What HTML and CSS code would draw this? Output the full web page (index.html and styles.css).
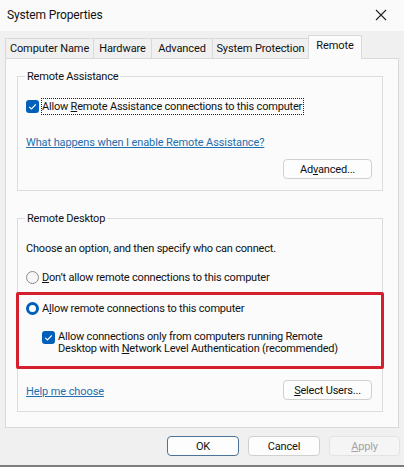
FILE: index.html
```html
<!DOCTYPE html>
<html>
<head>
<meta charset="utf-8">
<link rel="stylesheet" href="styles.css">
</head>
<body>
<div class="window">
  <div class="titlebar">
    <span class="title">System Properties</span>
    <svg class="close" width="12" height="12" viewBox="0 0 12 12"><path d="M1 1L11 11M11 1L1 11" stroke="#222" stroke-width="1.1" fill="none"/></svg>
  </div>
  <div class="tabs">
    <div class="tab">Computer Name</div>
    <div class="tab">Hardware</div>
    <div class="tab">Advanced</div>
    <div class="tab">System Protection</div>
    <div class="tab selected">Remote</div>
  </div>
  <div class="panel">
    <fieldset class="group group-ra">
      <legend>Remote Assistance</legend>
      <div class="row check-row">
        <span class="checkbox checked"><svg width="13" height="13" viewBox="0 0 13 13"><path d="M3.3 6.8L5.5 9L9.8 4.4" stroke="#fff" stroke-width="1.2" fill="none"/></svg></span>
        <span class="focus">Allow <u>R</u>emote Assistance connections to this computer</span>
      </div>
      <div class="link link-ra">What happens when I enable Remote Assistance?</div>
      <div class="btn-row">
        <div class="btn">Ad<u>v</u>anced...</div>
      </div>
    </fieldset>
    <fieldset class="group group-rd">
      <legend>Remote Desktop</legend>
      <div class="intro">Choose an option, and then specify who can connect.</div>
      <div class="row radio-row">
        <span class="radio"></span>
        <span><u>D</u>on’t allow remote connections to this computer</span>
      </div>
      <div class="highlight">
        <div class="row radio-row2">
          <span class="radio selected"></span>
          <span>A<u>l</u>low remote connections to this computer</span>
        </div>
        <div class="row nla-row">
          <span class="checkbox checked"><svg width="13" height="13" viewBox="0 0 13 13"><path d="M3.3 6.8L5.5 9L9.8 4.4" stroke="#fff" stroke-width="1.2" fill="none"/></svg></span>
          <span class="nla-text">Allow connections only from computers running Remote<br>Desktop with <u>N</u>etwork Level Authentication (recommended)</span>
        </div>
      </div>
      <div class="bottom-row">
        <div class="link">Help me choose</div>
        <div class="btn"><u>S</u>elect Users...</div>
      </div>
    </fieldset>
  </div>
  <div class="dialog-buttons">
    <div class="btn dbtn default">OK</div>
    <div class="btn dbtn">Cancel</div>
    <div class="btn dbtn disabled"><u>A</u>pply</div>
  </div>
</div>
</body>
</html>
```
FILE: styles.css
```css
* { box-sizing: border-box; }
html, body { margin: 0; padding: 0; }
body {
  font-family: Roboto, "Noto Sans", sans-serif;
  font-size: 11px;
  letter-spacing: -0.2px;
  line-height: 15px;
  color: #111;
  background: #f0f0f0;
}
.window {
  width: 404px;
  height: 467px;
  background: #f0f0f0;
  border-bottom: 2px solid #7d7d7d;
  display: flex;
  flex-direction: column;
}
.titlebar {
  height: 31px;
  background: #fafafa;
  display: flex;
  align-items: center;
  justify-content: space-between;
  padding: 0 17px 1px 7px;
  font-size: 12px;
  letter-spacing: -0.15px;
}
.close { display: block; }
.tabs {
  margin-top: 7px;
  margin-left: 5px;
  height: 20px;
  display: flex;
  align-items: flex-end;
  position: relative;
  z-index: 1;
}
.tab {
  height: 20px;
  border: 1px solid #d9d9d9;
  border-bottom: none;
  margin-right: -1px;
  display: flex;
  align-items: center;
  justify-content: center;
  white-space: nowrap;
  background: #f0f0f0;
  letter-spacing: -0.1px;
}
.tab:nth-child(1) { width: 89px; }
.tab:nth-child(2) { width: 59px; }
.tab:nth-child(3) { width: 62px; }
.tab:nth-child(4) { width: 97px; }
.tab.selected {
  width: 54px;
  height: 24px;
  margin-bottom: -1px;
  background: #fbfbfb;
  padding-bottom: 5px;
}
.panel {
  margin: 0 5px 0 5px;
  height: 370px;
  width: 394px;
  background: #fbfbfb;
  border: 1px solid #d9d9d9;
  padding: 10px 15px 0 11px;
}
.group {
  margin: 0;
  border: 1px solid #dcdcdc;
  padding: 0 0 10px 8px;
  min-width: 0;
}
.group legend {
  padding: 0 2px;
  margin-left: -1px;
}
.group-ra { height: 122px; }
.group-rd { margin-top: 20px; padding-bottom: 0; height: 201px; }
.row { display: flex; align-items: center; }
.check-row { margin-top: 15px; }
.checkbox {
  width: 13px;
  height: 13px;
  border-radius: 3px;
  background: #005fb8;
  margin-right: 3px;
  flex: none;
  display: block;
}
.checkbox svg { display: block; }
.focus {
  outline: 1px dotted #222;
  outline-offset: 0;
  padding: 0 1px 0 0;
}
.link {
  color: #1f6fae;
  text-decoration: underline;
  letter-spacing: -0.1px;
}
.link-ra { margin-top: 21px; }
.btn-row {
  display: flex;
  justify-content: flex-end;
  margin-top: 9px;
  padding-right: 10px;
}
.btn {
  width: 89px;
  height: 20px;
  border: 1px solid #d0d0d0;
  border-radius: 4px;
  background: #fdfdfd;
  display: flex;
  align-items: center;
  justify-content: center;
}
.intro { margin-top: 15px; }
.radio-row { margin-top: 14px; }
.radio {
  width: 13px;
  height: 13px;
  border-radius: 50%;
  border: 1px solid #8a8a8a;
  background: #f6f6f6;
  margin-right: 3px;
  flex: none;
}
.radio.selected {
  border: 3.5px solid #005fb8;
  background: #fff;
}
.highlight {
  margin: 7px -2px 0 -10px;
  border: 3px solid #d4202c;
  border-radius: 2px;
  padding: 6px 0 11px 7px;
}
.nla-row {
  margin-top: 15px;
  padding-left: 16px;
  align-items: flex-start;
}
.nla-row .checkbox { margin-top: 0; }
.nla-text { line-height: 12px; }
.bottom-row {
  margin-top: 11px;
  display: flex;
  justify-content: space-between;
  align-items: center;
  padding-right: 10px;
}
.bottom-row .link { margin-top: 2px; }
.dialog-buttons {
  display: flex;
  justify-content: flex-end;
  margin-top: 8px;
  padding-right: 4px;
  gap: 9px;
}
.dbtn { width: 72px; }
.dbtn.default { border-color: #4d7497; }
.dbtn.disabled { color: #a3a3a3; border-color: #e3e3e3; background: #f5f5f5; width: 71px; }
```
